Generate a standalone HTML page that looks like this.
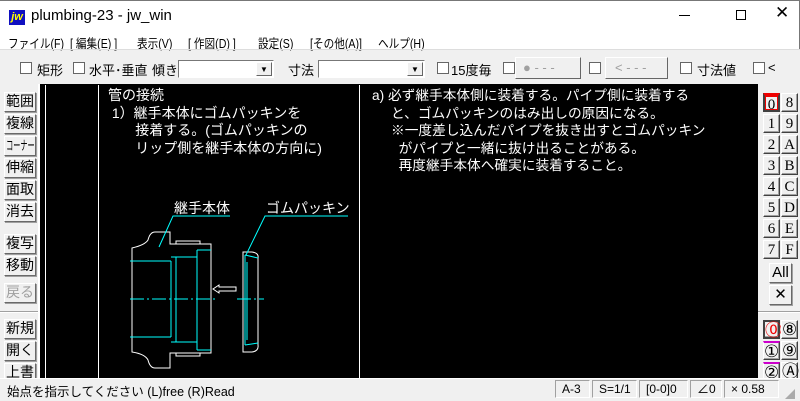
<!DOCTYPE html>
<html><head><meta charset="utf-8"><style>
*{margin:0;padding:0;box-sizing:border-box}
body{width:800px;height:400px;overflow:hidden;background:#f0f0f0;font-family:"Liberation Sans","Noto Sans CJK JP",sans-serif;position:relative;color:#000}
.a{position:absolute;white-space:nowrap}
.m{position:absolute;white-space:nowrap;top:33px;font-size:12.5px;transform:scaleX(0.85);transform-origin:left}
.btn{position:absolute;background:#f0f0f0;border:1px solid;border-color:#fff #696969 #696969 #fff;box-shadow:1px 1px 0 #a0a0a0;font-size:14px;text-align:center;line-height:17px;white-space:nowrap;overflow:hidden}
.cb{position:absolute;width:12px;height:12px;border:1px solid #666;background:#fff}
.lb{position:absolute;width:17px;height:19px;border:1px solid;border-color:#fff #404040 #404040 #fff;background:#f0f0f0;font-family:"Liberation Serif",serif;font-size:15px;text-align:center;line-height:18px;box-shadow:inset -1px -1px 0 #a0a0a0}
.sp{position:absolute;top:380px;height:18px;border:1px solid;border-color:#a0a0a0 #fff #fff #a0a0a0;font-size:12px;line-height:16px;padding-left:6px}
.t{font-size:13px;position:absolute;top:60px;white-space:nowrap}
</style></head><body>
<div class="a" style="left:0;top:0;width:800px;height:49px;background:#fff;border-right:1px solid #777;border-top:1px solid #777"></div>
<div class="a" style="left:9px;top:10px;width:16px;height:15px;background:#1010c0;color:#ff0;font:bold italic 11px 'Liberation Sans';line-height:14px;text-align:center">jw</div>
<div class="a" style="left:31px;top:7px;font-size:15px">plumbing-23 - jw_win</div>
<div class="a" style="left:679px;top:15px;width:11px;height:1px;background:#000"></div>
<div class="a" style="left:736px;top:10px;width:10px;height:10px;border:1px solid #000"></div>
<div class="a" style="left:775px;top:3px;font-size:17px;font-weight:300">✕</div>
<div class="m" style="left:8px">ファイル(<u>F</u>)</div>
<div class="m" style="left:70px">[ 編集(<u>E</u>) ]</div>
<div class="m" style="left:137px">表示(<u>V</u>)</div>
<div class="m" style="left:188px">[ 作図(<u>D</u>) ]</div>
<div class="m" style="left:258px">設定(<u>S</u>)</div>
<div class="m" style="left:310px">[その他(<u>A</u>)]</div>
<div class="m" style="left:378px">ヘルプ(<u>H</u>)</div>
<div class="a" style="left:0;top:49px;width:800px;height:1px;background:#ddd"></div>
<!-- toolbar -->
<div class="cb" style="left:20px;top:62px"></div><div class="t" style="left:37px">矩形</div>
<div class="cb" style="left:73px;top:62px"></div><div class="t" style="left:89px">水平･垂直</div>
<div class="t" style="left:152px">傾き</div>
<div class="a" style="left:178px;top:60px;width:96px;height:18px;background:#fff;border:1px solid;border-color:#777 #fff #fff #777"></div>
<div class="a" style="left:256px;top:62px;width:16px;height:14px;background:#f0f0f0;border:1px solid;border-color:#fff #666 #666 #fff;font-size:8px;text-align:center;line-height:13px">▼</div>
<div class="t" style="left:288px">寸法</div>
<div class="a" style="left:318px;top:60px;width:107px;height:18px;background:#fff;border:1px solid;border-color:#777 #fff #fff #777"></div>
<div class="a" style="left:407px;top:62px;width:16px;height:14px;background:#f0f0f0;border:1px solid;border-color:#fff #666 #666 #fff;font-size:8px;text-align:center;line-height:13px">▼</div>
<div class="cb" style="left:437px;top:62px"></div><div class="t" style="left:451px">15度毎</div>
<div class="cb" style="left:503px;top:62px"></div>
<div class="a" style="left:515px;top:57px;width:66px;height:22px;border:1px solid;border-color:#fff #666 #666 #fff;color:#a0a0a0;font-size:13px;padding-left:7px;line-height:19px">● - - -</div>
<div class="cb" style="left:589px;top:62px"></div>
<div class="a" style="left:605px;top:57px;width:63px;height:22px;border:1px solid;border-color:#fff #666 #666 #fff;color:#a0a0a0;font-size:13px;padding-left:9px;line-height:19px">&lt; - - -</div>
<div class="cb" style="left:680px;top:62px"></div><div class="t" style="left:697px">寸法値</div>
<div class="cb" style="left:753px;top:62px"></div><div class="t" style="left:768px">&lt;</div>
<!-- canvas -->
<div class="a" style="left:38px;top:84px;width:720px;height:295px;background:#000;border-left:2px solid #fff"></div>
<svg class="a" style="left:0;top:0" width="800" height="400">
<g stroke="#fff" stroke-width="1" fill="none">
<line x1="45.5" y1="85" x2="45.5" y2="378"/><line x1="98.5" y1="85" x2="98.5" y2="378"/><line x1="359.5" y1="85" x2="359.5" y2="378"/>
<path d="M132,248 Q145,245 148,240 Q150,232 155,232 L170,232 L170,244 L211,244 L211,353 L170,353 L170,368 L155,368 Q150,368 148,360 Q145,354 132,352 Z"/>
<path d="M176,244 L176,241 L200,241 L200,244 M176,353 L176,356 L200,356 L200,353"/>
<path d="M236,287 L219,287 L219,285 L213,289 L219,293 L219,291 L236,291 Z"/>
<path d="M243,252 L252,252 Q259,253 258,258 L258,345 Q259,351 252,352 L243,352 Z"/>
</g>
<g stroke="#0ff" stroke-width="1" fill="none">
<path d="M130,261 L171,261 M130,337 L171,337 M171,261 L171,337 M171,257 L197,257 M176,257 L176,342 M171,342 L197,342 M197,250 L197,350 M197,250 L211,250 M197,350 L211,350"/>
<path d="M130,299 L217,299 M237,299 L264,299" stroke-dasharray="14,3,2,3"/>
<path d="M159,247 L173,216 L230,216 M246,255 L265,216 L348,216"/>
<path d="M245,255 L245,345 M247,262 L247,340 M245,255 L258,258 M245,345 L258,343"/>
</g>
</svg>
<div class="a" style="left:108px;top:87px;color:#fff;font-size:14px;line-height:17.5px">管の接続<br>&nbsp;1）継手本体にゴムパッキンを<br>&nbsp;&nbsp;&nbsp;&nbsp;&nbsp;&nbsp;&nbsp;接着する。(ゴムパッキンの<br>&nbsp;&nbsp;&nbsp;&nbsp;&nbsp;&nbsp;&nbsp;リップ側を継手本体の方向に)</div>
<div class="a" style="left:174px;top:198px;color:#fff;font-size:14px">継手本体</div>
<div class="a" style="left:266px;top:198px;color:#fff;font-size:14px">ゴムパッキン</div>
<div class="a" style="left:372px;top:87px;color:#fff;font-size:13.7px;line-height:17.5px">a)&nbsp;必ず継手本体側に装着する。パイプ側に装着する<br>&nbsp;&nbsp;&nbsp;&nbsp;&nbsp;と、ゴムパッキンのはみ出しの原因になる。<br>&nbsp;&nbsp;&nbsp;&nbsp;&nbsp;※一度差し込んだパイプを抜き出すとゴムパッキン<br>&nbsp;&nbsp;&nbsp;&nbsp;&nbsp;&nbsp;&nbsp;がパイプと一緒に抜け出ることがある。<br>&nbsp;&nbsp;&nbsp;&nbsp;&nbsp;&nbsp;&nbsp;再度継手本体へ確実に装着すること。</div>
<!-- left buttons -->
<div class="btn" style="left:4px;top:92px;width:32px;height:20px">範囲</div>
<div class="btn" style="left:4px;top:114px;width:32px;height:20px">複線</div>
<div class="btn" style="left:4px;top:136px;width:32px;height:20px;text-align:left"><span style="display:inline-block;font-size:13px;transform:scaleX(0.55);transform-origin:left;padding-left:2px">コーナー</span></div>
<div class="btn" style="left:4px;top:158px;width:32px;height:20px">伸縮</div>
<div class="btn" style="left:4px;top:180px;width:32px;height:20px">面取</div>
<div class="btn" style="left:4px;top:202px;width:32px;height:20px">消去</div>
<div class="btn" style="left:4px;top:234px;width:32px;height:20px">複写</div>
<div class="btn" style="left:4px;top:256px;width:32px;height:20px">移動</div>
<div class="btn" style="left:4px;top:283px;width:32px;height:20px;color:#a0a0a0">戻る</div>
<div class="a" style="left:0;top:311px;width:38px;height:2px;border-top:1px solid #a0a0a0;border-bottom:1px solid #fff"></div>
<div class="btn" style="left:4px;top:319px;width:32px;height:20px">新規</div>
<div class="btn" style="left:4px;top:341px;width:32px;height:20px">開く</div>
<div class="btn" style="left:4px;top:363px;width:32px;height:20px">上書</div>
<!-- right layer buttons -->
<div class="lb" style="left:763px;top:93px;border:2px solid #404040;border-top:3px solid #e00;box-shadow:inset 0 0 0 1px #e00">0</div><div class="lb" style="left:781px;top:93px">8</div>
<div class="lb" style="left:763px;top:114px">1</div><div class="lb" style="left:781px;top:114px">9</div>
<div class="lb" style="left:763px;top:135px">2</div><div class="lb" style="left:781px;top:135px">A</div>
<div class="lb" style="left:763px;top:156px">3</div><div class="lb" style="left:781px;top:156px">B</div>
<div class="lb" style="left:763px;top:177px">4</div><div class="lb" style="left:781px;top:177px">C</div>
<div class="lb" style="left:763px;top:198px">5</div><div class="lb" style="left:781px;top:198px">D</div>
<div class="lb" style="left:763px;top:219px">6</div><div class="lb" style="left:781px;top:219px">E</div>
<div class="lb" style="left:763px;top:240px">7</div><div class="lb" style="left:781px;top:240px">F</div>
<div class="btn" style="left:769px;top:263px;width:23px;height:20px;font-size:15px">All</div>
<div class="btn" style="left:769px;top:285px;width:23px;height:20px;font-size:15px">✕</div>
<div class="a" style="left:758px;top:311px;width:42px;height:2px;border-top:1px solid #a0a0a0;border-bottom:1px solid #fff"></div>
<div class="lb" style="left:763px;top:320px;border:2px solid #404040;color:#e00;font-size:17px">⓪</div><div class="lb" style="left:781px;top:320px;font-size:17px">⑧</div>
<div class="lb" style="left:763px;top:341px;border-top:2px solid #c0c;font-size:17px">①</div><div class="lb" style="left:781px;top:341px;font-size:17px">⑨</div>
<div class="lb" style="left:763px;top:362px;border-top:2px solid #c0c;font-size:17px">②</div><div class="lb" style="left:781px;top:362px;font-size:17px">Ⓐ</div>
<!-- status -->
<div class="a" style="left:0;top:378px;width:800px;height:22px;background:#f0f0f0;border-top:1px solid #fff"></div>
<div class="a" style="left:7px;top:381px;font-size:12.5px">始点を指示してください (L)free (R)Read</div>
<div class="sp" style="left:555px;width:35px">A-3</div>
<div class="sp" style="left:592px;width:45px">S=1/1</div>
<div class="sp" style="left:639px;width:49px">[0-0]0</div>
<div class="sp" style="left:690px;width:32px">∠0</div>
<div class="sp" style="left:724px;width:55px">×&nbsp;0.58</div>
<div class="a" style="left:785px;top:386px;color:#aaa;font-size:10px">◢</div>
</body></html>
